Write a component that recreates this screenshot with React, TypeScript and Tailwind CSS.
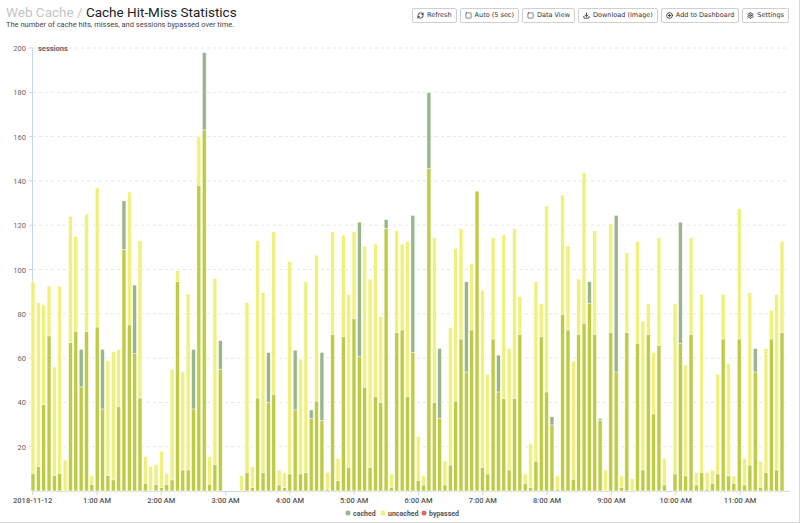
import { RefreshCw, Square, Download, PlusCircle, Settings } from 'lucide-react';

// [olive, total, kind] kind: y = uncached on top, g = cached on top
type Bar = [number, number, 'y' | 'g'] | null;

const BARS: Bar[] = [
  [8, 94.5, 'y'], [11, 85, 'y'], [39, 84, 'y'], [70, 92.5, 'y'], [7, 56, 'y'], [8, 92.5, 'y'], [0, 14, 'y'],
  [67, 124, 'y'], [72, 115, 'y'], [47, 64, 'g'], [72, 125, 'y'], [3, 7, 'y'], [74, 137, 'y'], [37, 64, 'g'],
  [7, 59, 'y'], [5, 63, 'y'], [38, 64, 'y'], [109, 131, 'g'], [75, 135, 'y'], [62, 93, 'g'], [42, 113, 'y'],
  [3.5, 15.5, 'y'], [0, 11, 'y'], [3, 12, 'y'], [1.5, 18, 'y'], [3, 8, 'y'], [5, 55, 'y'], [94.5, 99.5, 'y'],
  [9.5, 54, 'y'], [9.5, 89, 'y'], [37, 64, 'g'], [138, 160, 'y'], [163, 198, 'g'], [3, 15.5, 'y'], [12, 96, 'y'],
  [55, 68, 'g'], null, null, null,
  [0, 7, 'y'], [8.4, 85, 'y'], [1.5, 11, 'y'], [42, 113, 'y'], [8.4, 89.5, 'y'], [40, 62.6, 'g'], [43.6, 117, 'y'],
  [2.7, 9.5, 'y'], [1.5, 8.4, 'y'], [7.7, 103.5, 'y'], [36.6, 63.6, 'g'], [7.7, 59.6, 'y'], [8.4, 94.5, 'y'],
  [32.8, 36.6, 'g'], [40.6, 106.5, 'y'], [31.8, 62.6, 'g'], [0.8, 8.4, 'y'], [70.7, 117, 'y'], [4.7, 14.7, 'y'],
  [69.7, 115.6, 'y'], [10.7, 88.8, 'y'], [77.7, 117, 'y'], [60.6, 121.4, 'g'], [46.8, 110.6, 'y'], [10.7, 95.7, 'y'],
  [42.6, 111.5, 'y'], [39.9, 78.7, 'y'], [118.6, 122.6, 'g'], [1.5, 7.7, 'y'], [71.5, 117.5, 'y'], [72.7, 111.5, 'y'],
  [42.6, 112.7, 'y'], [62.6, 124.5, 'g'], [4.7, 24.8, 'y'], [2.7, 6.8, 'y'],
  [145.7, 180, 'g'], [39.9, 114.5, 'y'], [32.8, 64.4, 'g'], [2.7, 13.5, 'y'], [11.7, 73.7, 'y'], [40.6, 109.6, 'y'],
  [68.6, 118.6, 'y'], [53.7, 94.5, 'g'], [72.7, 102.8, 'y'], [135.4, 135.4, 'y'], [10.7, 90.7, 'y'], [7.7, 52.7, 'y'],
  [68.6, 114.5, 'y'], [44.7, 61.4, 'g'], [41.7, 115.6, 'y'], [9.5, 64.4, 'y'], [41.7, 118.6, 'y'], [70.7, 87.7, 'y'],
  [3.5, 7.7, 'y'], [1.5, 21.5, 'y'], [13.5, 94.5, 'y'], [69.7, 84.7, 'y'], [44.7, 128.7, 'y'], [29.8, 33.6, 'g'],
  [0.8, 6.8, 'y'], [79.8, 133.6, 'y'], [72.7, 110.6, 'y'], [5.3, 58.7, 'y'], [70.7, 95.7, 'y'], [75.7, 143.8, 'y'],
  [84.7, 94.5, 'g'], [70.7, 117.5, 'y'], [31.8, 32.8, 'g'], [0, 9.5, 'y'], [71.5, 120.8, 'y'], [53.7, 124.5, 'g'],
  [1.5, 6.8, 'y'], [71.5, 107.6, 'y'], [0, 5.7, 'y'], [66.7, 112.7, 'y'], [9.5, 76.7, 'y'], [70.7, 84.7, 'y'],
  [34.8, 62.6, 'y'], [65.6, 114.5, 'y'], [2.7, 14.7, 'y'], null, [7.7, 84.7, 'y'], [66.7, 121.4, 'g'],
  [6.8, 56.9, 'y'], [70.7, 114.5, 'y'], [2.7, 8.4, 'y'], [8.4, 88.8, 'y'], [0.8, 8.4, 'y'], [3.5, 9.5, 'y'],
  [7.7, 52.7, 'y'], [68.6, 88.8, 'y'], [6.8, 57.6, 'y'], [3.5, 6.8, 'y'], [68.6, 127.6, 'y'], [2.7, 14.7, 'y'],
  [11.7, 89.5, 'y'], [53.7, 64.4, 'g'], [1.5, 13.5, 'y'], [8.4, 64.4, 'y'], [68.6, 81.7, 'y'], [9.5, 88.8, 'y'],
  [71.5, 112.7, 'y'],
];

// svg starts at page y=40
const Y0 = 451;
const K = 2.215;
const yOf = (v: number) => Y0 - v * K;
const HOURS = ['2018-11-12', '1:00 AM', '2:00 AM', '3:00 AM', '4:00 AM', '5:00 AM', '6:00 AM', '7:00 AM', '8:00 AM', '9:00 AM', '10:00 AM', '11:00 AM'];

function Chart() {
  return (
    <svg width={800} height={483} className="block" style={{ fontFamily: 'Roboto, "Liberation Sans", sans-serif' }}>
      {[20, 40, 60, 80, 100, 120, 140, 160, 180, 200].map((v) => (
        <g key={v}>
          <line x1={33} x2={788} y1={yOf(v)} y2={yOf(v)} stroke="#e6e6e6" strokeDasharray="3 3" />
          <line x1={29} x2={33} y1={yOf(v)} y2={yOf(v)} stroke="#c9d6e6" />
          <text x={26} y={yOf(v) + 3} textAnchor="end" fontSize={7.5} fill="#666">{v}</text>
        </g>
      ))}
      <line x1={32.5} x2={32.5} y1={8} y2={Y0} stroke="#c9d6e6" />
      <line x1={32} x2={790} y1={Y0 + 0.5} y2={Y0 + 0.5} stroke="#c9d6e6" />
      <text x={38} y={11} fontSize={7.5} fontWeight={700} fill="#666">sessions</text>
      {BARS.map((b, i) => {
        if (!b) return null;
        const x = 31 + 5.35 * i;
        const [o, t, kind] = b;
        return (
          <g key={i}>
            <rect x={x} y={yOf(t)} width={4} height={t * K} fill={kind === 'g' ? '#98b68a' : '#eff07d'} stroke="#fff" strokeWidth={0.6} />
            {o > 0 && <rect x={x} y={yOf(o)} width={4} height={o * K} fill="#bdcb45" stroke="#fff" strokeWidth={0.6} />}
          </g>
        );
      })}
      {HOURS.map((h, i) => {
        const x = 32.7 + 64.3 * i;
        return (
          <g key={h}>
            <line x1={x} x2={x} y1={Y0} y2={Y0 + 4} stroke="#c9d6e6" />
            <text x={x} y={Y0 + 12} textAnchor="middle" fontSize={7.5} fontWeight={500} fill="#555">{h}</text>
          </g>
        );
      })}
      <g fontSize={7} fontWeight={700} fill="#555">
        <circle cx={348} cy={473} r={2.5} fill="#98b68a" />
        <text x={353} y={475.5}>cached</text>
        <circle cx={383} cy={473} r={2.5} fill="#eff07d" />
        <text x={388} y={475.5}>uncached</text>
        <circle cx={424} cy={473} r={2.5} fill="#e06a6a" />
        <text x={429} y={475.5}>bypassed</text>
      </g>
    </svg>
  );
}

function Btn({ icon, label }: { icon: React.ReactNode; label: string }) {
  return (
    <button className="flex items-center gap-[3px] h-[15px] px-[4px] border border-[#cfcfcf] rounded-[2px] bg-white text-[6.5px] text-[#333] leading-none">
      {icon}
      {label}
    </button>
  );
}

export default function App() {
  return (
    <div className="w-[800px] h-[523px] bg-white overflow-hidden border-r border-b border-[#d6d6d6]" style={{ fontFamily: 'Roboto, "Liberation Sans", sans-serif' }}>
      <div className="h-[40px] flex justify-between px-[6px] pt-[4px]">
        <div>
          <div className="text-[13.5px] leading-[16px]">
            <span className="text-[#c4c4c4]">Web Cache / </span>
            <span className="text-[#222]">Cache Hit-Miss Statistics</span>
          </div>
          <div className="text-[7.5px] text-[#444] leading-[10px]">The number of cache hits, misses, and sessions bypassed over time.</div>
        </div>
        <div className="flex gap-[3px] mt-[4px] pr-[4px]" style={{ fontFamily: '"DejaVu Sans", sans-serif' }}>
          <Btn icon={<RefreshCw size={7} strokeWidth={3} />} label="Refresh" />
          <Btn icon={<Square size={7} />} label="Auto (5 sec)" />
          <Btn icon={<Square size={7} />} label="Data View" />
          <Btn icon={<Download size={7} strokeWidth={3} />} label="Download (Image)" />
          <Btn icon={<PlusCircle size={7} strokeWidth={3} />} label="Add to Dashboard" />
          <Btn icon={<Settings size={7} strokeWidth={3} />} label="Settings" />
        </div>
      </div>
      <Chart />
    </div>
  );
}
